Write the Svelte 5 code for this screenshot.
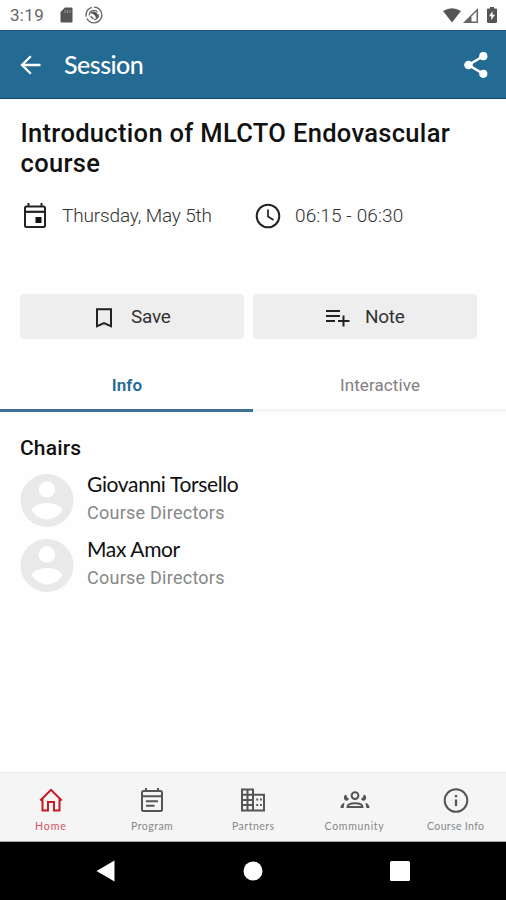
<script>
  const chairs = ['Giovanni Torsello', 'Max Amor'];
  const tabs = [
    { name: 'Home', ls: 0.9 },
    { name: 'Program', ls: 0.5 },
    { name: 'Partners', ls: 0.5 },
    { name: 'Community', ls: 0.7 },
    { name: 'Course Info', ls: 0.35 }
  ];
</script>

<div class="screen">
  <div class="status">
    <span class="time">3:19</span>
    <svg class="sd" width="13" height="16" viewBox="0 0 13 16"><path d="M5 .5h6.500q1 0 1 1v13q0 1-1 1h-10q-1 0-1-1V5z" fill="#555" /><path d="M5 3v3M7.500 3v3M10 3v3" stroke="#999" stroke-width="1" /></svg>
    <svg class="ring" width="18" height="18" viewBox="0 0 18 18" fill="none" stroke="#666"><circle cx="9" cy="9" r="7.900" stroke-width="1.400" stroke-dasharray="21 2 12 2 12" /><path d="M4.300 9.500v-1A4.700 4.700 0 0 1 12.500 6M13.600 8.500a4.700 4.700 0 0 1-4.600 5.200" stroke-width="1.200" /><path d="M5.200 7.300Q8 4.300 11.300 6.500q2.500 2 1.300 5l-1.600 1.300q-.3-4.800-5.800-5.500z" fill="#555" stroke="none" /><path d="m5.500 10.300 3 2.600" stroke-width="1.500" /></svg>
    <span class="grow"></span>
    <svg width="18" height="15" viewBox="0 0 18 15"><path d="M0 3Q9-2.600 18 3L9 14.500z" fill="#555" /></svg>
    <svg class="signal" width="15" height="15" viewBox="0 0 15 15"><path d="M0 15 15 0v15z" fill="#666" /><path d="M8.500 8.500 13.500 3.500v10h-5z" fill="#fff" /></svg>
    <svg class="battery" width="10" height="16" viewBox="0 0 10 16"><path d="M3 0h4v1.500h2q1 0 1 1V15q0 1-1 1H1q-1 0-1-1V2.500q0-1 1-1h2z" fill="#555" /><path d="M5.500 4 2 9.300h2.300V13L8 7.700H5.500z" fill="#fff" /></svg>
  </div>

  <header>
    <svg class="back" width="21" height="20" viewBox="0 0 21 20" fill="none" stroke="#fff" stroke-width="2.300"><path d="M20.500 10H2M10.800 1.300 2 10l8.800 8.700" /></svg>
    <span class="heading">Session</span>
    <span class="grow"></span>
    <svg width="24" height="26" viewBox="0 0 24 26" fill="#fff"><path d="M19 4.200 4.500 13 19 21.800" fill="none" stroke="#fff" stroke-width="2.500" /><circle cx="19.300" cy="4.200" r="4.100" /><circle cx="4.500" cy="13" r="4.300" /><circle cx="19.300" cy="21.800" r="4.100" /></svg>
  </header>

  <main>
    <h1>Introduction of MLCTO Endovascular<br />course</h1>
    <div class="meta">
      <svg width="24" height="26" viewBox="0 0 24 26"><path d="M5.500 0v4M18.500 0v4" stroke="#222" stroke-width="2" /><rect x="2" y="3.500" width="20" height="20.500" rx="1.500" fill="none" stroke="#222" stroke-width="2" /><path d="M2 8.800h20" stroke="#222" stroke-width="2.200" /><path d="M12.500 14h6v6h-6z" fill="#111" /></svg>
      <span class="date">Thursday, May 5th</span>
      <svg class="clock" width="26" height="26" viewBox="0 0 26 26" fill="none" stroke="#222" stroke-width="2"><circle cx="13" cy="13" r="11.300" /><path d="M13 6.500v7l5.500 3.500" stroke-width="1.700" /></svg>
      <span class="hours">06:15 - 06:30</span>
    </div>
    <div class="actions">
      <button class="save">
        <svg width="18" height="20" viewBox="0 0 18 20" fill="none" stroke="#222" stroke-width="2"><path d="M2 1.200h14v17l-7-3-7 3z" /></svg>
        <span>Save</span>
      </button>
      <button class="note">
        <svg width="24" height="18" viewBox="0 0 24 18" fill="none" stroke="#222" stroke-width="2"><path d="M0 2h14M0 7h14M0 12h9M17.500 6.500v11M12 12h11.500" /></svg>
        <span>Note</span>
      </button>
    </div>
    <div class="tabs">
      <div class="tab active"><span>Info</span></div>
      <div class="tab"><span>Interactive</span></div>
    </div>
    <section>
      <h2>Chairs</h2>
      {#each chairs as name}
        <div class="person">
          <svg width="54" height="54" viewBox="0 0 54 54"><circle cx="27" cy="26.500" r="26.500" fill="#e9e9e9" /><circle cx="27" cy="15.500" r="8.300" fill="#fff" /><path d="M11.500 36C15 26.500 39 26.500 42.500 36 35 48.500 19 48.500 11.500 36z" fill="#fff" /></svg>
          <div class="bio">
            <span class="name">{name}</span>
            <span class="role">Course Directors</span>
          </div>
        </div>
      {/each}
    </section>
  </main>

  <nav>
    {#each tabs as tab, i}
      <div class="item" class:current={i === 0}>
        <svg width="30" height="26" viewBox="0 0 30 26" fill="none" stroke="currentColor" stroke-width="2">
          {#if i === 0}
            <path d="M4.300 13.500 15 2.800 25.700 13.500M6.500 11.500V23.500H12V15h6v8.500h5.500V11.500" />
          {:else if i === 1}
            <path d="M9 1v4M21 1v4M5 9.300h20M9 14.200h12M9 18.800h8.500" /><rect x="5" y="4" width="20" height="20" rx="1.500" />
          {:else if i === 2}
            <path d="M4 2.500h11v21H4zM9.500 2.500v21M4 7.700h11M4 12.900h11M4 18.100h11M15 7.700h11v15.800H15" /><path d="M18.300 12.500h1.900M22 12.500h1.900M18.300 18h1.900M22 18h1.900" />
          {:else if i === 3}
            <circle cx="15" cy="8.600" r="3.400" /><path d="M7.500 20c0-5 15-5 15 0z" /><g fill="currentColor" stroke="none"><path d="M3.800 10.500q0-2.500 2.400-3 .2 3 2.800 4.500-1 2-2.800 1.700-2.400-.7-2.400-3.200zM26.200 10.500q0-2.500-2.400-3-.2 3-2.800 4.500 1 2 2.800 1.700 2.400-.7 2.400-3.200zM.5 21q0-4 4-5.200L3.600 21zM29.500 21q0-4-4-5.200l.9 5.200z" /></g>
          {:else}
            <circle cx="15" cy="13.500" r="11.300" /><path d="M15 8v2.300M15 12.500V19" stroke-width="2.300" />
          {/if}
        </svg>
        <span class="label" style:letter-spacing="{tab.ls}px">{tab.name}</span>
      </div>
    {/each}
  </nav>
  <footer>
    <div><svg width="19" height="22" viewBox="0 0 19 22"><path d="M18.500.5v21L.5 11z" fill="#fff" /></svg></div>
    <div><svg width="20" height="20" viewBox="0 0 20 20"><circle cx="10" cy="10" r="9.500" fill="#fff" /></svg></div>
    <div><svg width="20" height="20" viewBox="0 0 20 20"><rect width="20" height="20" rx="1.500" fill="#fff" /></svg></div>
  </footer>
</div>

<style>
  :global(body) { margin: 0; background: #fefefe; }
  * { box-sizing: border-box; }
  svg { display: block; flex: none; }
  span { white-space: nowrap; }
  .screen { width: 506px; height: 900px; display: flex; flex-direction: column; font-family: Roboto, sans-serif; background: #fefefe; overflow: hidden; }
  .grow { flex: 1; }
  .status { height: 30px; flex: none; display: flex; align-items: center; padding: 0 9px 0 10px; }
  .time { width: 50px; font-size: 17px; color: #666; letter-spacing: 0.3px; }
  .ring { margin-left: 12px; }
  .signal { margin-left: 2px; }
  .battery { margin-left: 9px; }
  header { height: 69px; flex: none; display: flex; align-items: center; padding: 0 18px 0 20px; background: #236b93; border-top: 1px solid #15557f; border-bottom: 1px solid #0b4773; }
  .heading { margin: -1px 0 0 23px; color: #fff; font: 500 25px/32px Lato, sans-serif; letter-spacing: -0.5px; }
  main { flex: 1; min-height: 0; }
  h1 { margin: 19px 0 0 20.5px; font-size: 25.5px; line-height: 30px; font-weight: 500; color: #111; white-space: nowrap; letter-spacing: 0.32px; }
  .meta { height: 26px; margin: 25px 0 0 23px; display: flex; align-items: center; font-size: 19px; line-height: 24px; font-weight: 300; color: #333; }
  .date { width: 193px; margin-left: 15px; letter-spacing: -0.15px; }
  .meta span { margin-top: -1px; }
  .hours { margin-left: 14px; letter-spacing: 0.1px; }
  .actions { display: flex; gap: 9px; padding: 65px 0 0 20px; }
  button { width: 224px; height: 45px; padding: 0; border: 0; border-radius: 4px; background: #eee; color: #333; display: flex; align-items: center; font: 400 19px/24px Roboto, sans-serif; letter-spacing: -0.3px; }
  .save svg { margin: 2px 18px 0 75px; }
  .note svg { margin: 3px 15px 0 73px; }
  .tabs { display: flex; height: 57px; margin-top: 16px; }
  .tab { flex: 1; text-align: center; padding: 19px 0 0 1px; font-size: 17px; line-height: 22px; color: #808080; border-bottom: 3px solid #f3f3f3; letter-spacing: 0.1px; }
  .active { color: #236b93; font-weight: 600; border-color: #3d7195; }
  section { padding: 20px 20px 0; }
  h2 { margin: 0 0 10px; font-size: 21px; line-height: 32px; font-weight: 500; color: #111; letter-spacing: 0.15px; }
  .person { height: 65px; display: flex; }
  .bio { margin: -2px 0 0 13px; display: flex; flex-direction: column; }
  .name { font: 400 21px/24px Lato, sans-serif; color: #111; letter-spacing: -0.36px; }
  .role { margin-top: 5px; font-size: 18px; line-height: 24px; color: #888; letter-spacing: 0.25px; }
  nav { height: 70px; flex: none; display: flex; background: #f5f5f5; border-top: 1px solid #e9e9e9; border-bottom: 1px solid #aaa; }
  .item { flex: 1; display: flex; flex-direction: column; align-items: center; padding: 14px 0 0 0.6px; color: #555; }
  .label { margin-top: 6px; font: 400 10.5px/14px Lato, sans-serif; color: #888; }
  .current { color: #c71a22; }
  .current .label { color: #d35263; }
  footer { height: 58px; flex: none; display: flex; padding: 0 33px 0 34px; background: #000; }
  footer div { flex: 1; display: flex; align-items: center; justify-content: center; }
  footer div:first-child svg { margin-right: 4px; }
</style>
